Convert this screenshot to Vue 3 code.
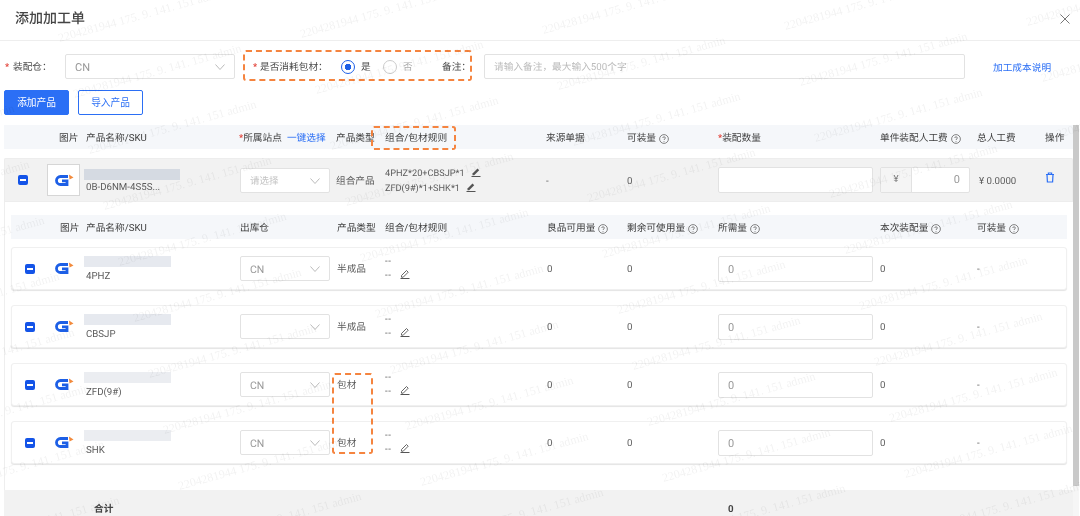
<script setup>
const marks = []
for (let r = -2; r < 10; r++) {
  for (let c = -2; c < 6; c++) {
    const x = 60 + c * 242 + r * 15
    const y = 44 + c * -4 + r * 56
    // only the ones that reach into the page
    if (x > -170 && x < 1060 && y > 4 && y < 560) marks.push({ x, y: y - 12 })
  }
}

const children = [
  { sku: '4PHZ', store: 'CN', type: '半成品', bar: '#e6e9ef' },
  { sku: 'CBSJP', store: '', type: '半成品', bar: '#e6e9ef' },
  { sku: 'ZFD(9#)', store: 'CN', type: '包材', bar: '#ebedf1' },
  { sku: 'SHK', store: 'CN', type: '包材', bar: '#ebedf1' }
]
</script>

<template>
  <div class="page">
    <div class="title-bar">
      <span class="title">添加加工单</span>
      <svg class="close" width="10" height="10" viewBox="0 0 10 10"><path d="M0.5 0.5 9.5 9.5M9.5 0.5 0.5 9.5" stroke="#777" stroke-width="1" fill="none" /></svg>
    </div>

    <div class="form-row">
      <span class="req">*</span>
      <span class="label w-store">装配仓：</span>
      <div class="select w-main">
        <span>CN</span>
        <svg class="chev" width="10" height="6" viewBox="0 0 10 6"><path d="M0.5 0.5 5 5.5 9.5 0.5" stroke="#bbb" fill="none" /></svg>
      </div>
      <span class="req consume">*</span>
      <span class="label w-consume">是否消耗包材：</span>
      <span class="radio on"></span>
      <span class="radio-text">是</span>
      <span class="radio"></span>
      <span class="radio-text off">否</span>
      <span class="label w-note">备注：</span>
      <div class="note-input">请输入备注，最大输入500个字</div>
      <a class="link">加工成本说明</a>
    </div>

    <div class="toolbar">
      <button class="btn primary">添加产品</button>
      <button class="btn ghost">导入产品</button>
    </div>

    <div class="body">
      <div class="tbl">
        <div class="head cols">
          <span></span>
          <span>图片</span>
          <span>产品名称/SKU</span>
          <span class="site"><i>*</i>所属站点<a>一键选择</a></span>
          <span>产品类型</span>
          <span>组合/包材规则</span>
          <span>来源单据</span>
          <span class="tip">可装量
            <svg width="10" height="10" viewBox="0 0 10 10"><circle cx="5" cy="5" r="4.4" fill="none" stroke="#666" stroke-width=".8" /><path d="M3.7 4C3.7 2.4 6.4 2.4 6.4 4 6.4 5 5 4.9 5 6M5 7v.8" fill="none" stroke="#666" stroke-width=".8" /></svg>
          </span>
          <span><i>*</i>装配数量</span>
          <span class="tip">单件装配人工费
            <svg width="10" height="10" viewBox="0 0 10 10"><circle cx="5" cy="5" r="4.4" fill="none" stroke="#666" stroke-width=".8" /><path d="M3.7 4C3.7 2.4 6.4 2.4 6.4 4 6.4 5 5 4.9 5 6M5 7v.8" fill="none" stroke="#666" stroke-width=".8" /></svg>
          </span>
          <span>总人工费</span>
          <span>操作</span>
        </div>

        <div class="parent item-cols">
          <div class="lead">
            <span class="check"></span>
            <div class="thumb">
              <svg width="21" height="13" viewBox="0 0 21 13"><path d="M15 2.5H7.5a4 4 0 0 0 0 8h6.5V6.8H9" fill="none" stroke="#1d5fe6" stroke-width="2.8" /><path d="M16 0.5 20.5 3.5 16.5 5.5Z" fill="#f28a3c" /></svg>
            </div>
          </div>
          <div class="name parent-name">
            <div class="bar"></div>
            <div class="sku">0B-D6NM-4S5S...</div>
          </div>
          <div class="select w-row muted">
            <span>请选择</span>
            <svg class="chev" width="10" height="6" viewBox="0 0 10 6"><path d="M0.5 0.5 5 5.5 9.5 0.5" stroke="#bbb" fill="none" /></svg>
          </div>
          <div class="t">组合产品</div>
          <div class="rules">
            <div>4PHZ*20+CBSJP*1
              <svg class="pen" width="10" height="10" viewBox="0 0 10 10"><path d="M1.5 6.5 6.5 1.5 8.2 3.2 3.2 8.2H1.5Z" fill="#555" /><path d="M0.5 9.5H9.5" stroke="#555" /></svg>
            </div>
            <div>ZFD(9#)*1+SHK*1
              <svg class="pen" width="10" height="10" viewBox="0 0 10 10"><path d="M1.5 6.5 6.5 1.5 8.2 3.2 3.2 8.2H1.5Z" fill="#555" /><path d="M0.5 9.5H9.5" stroke="#555" /></svg>
            </div>
          </div>
          <div class="t">-</div>
          <div class="t">0</div>
          <div class="num-input blank"></div>
          <div class="money">
            <span class="addon">¥</span>
            <span class="money-val">0</span>
          </div>
          <div class="t total">¥ 0.0000</div>
          <div>
            <svg width="10" height="11" viewBox="0 0 10 11"><path d="M1 2.5H9M3.4 2.5V1H6.6V2.5M2 2.5 2.4 10H7.6L8 2.5" fill="none" stroke="#2b6ff5" stroke-width="1.2" /></svg>
          </div>
        </div>

        <div class="kids">
          <div class="kid-head kid-cols">
            <span></span>
            <span>图片</span>
            <span>产品名称/SKU</span>
            <span>出库仓</span>
            <span>产品类型</span>
            <span>组合/包材规则</span>
            <span class="tip">良品可用量
              <svg width="10" height="10" viewBox="0 0 10 10"><circle cx="5" cy="5" r="4.4" fill="none" stroke="#666" stroke-width=".8" /><path d="M3.7 4C3.7 2.4 6.4 2.4 6.4 4 6.4 5 5 4.9 5 6M5 7v.8" fill="none" stroke="#666" stroke-width=".8" /></svg>
            </span>
            <span class="tip">剩余可使用量
              <svg width="10" height="10" viewBox="0 0 10 10"><circle cx="5" cy="5" r="4.4" fill="none" stroke="#666" stroke-width=".8" /><path d="M3.7 4C3.7 2.4 6.4 2.4 6.4 4 6.4 5 5 4.9 5 6M5 7v.8" fill="none" stroke="#666" stroke-width=".8" /></svg>
            </span>
            <span class="tip">所需量
              <svg width="10" height="10" viewBox="0 0 10 10"><circle cx="5" cy="5" r="4.4" fill="none" stroke="#666" stroke-width=".8" /><path d="M3.7 4C3.7 2.4 6.4 2.4 6.4 4 6.4 5 5 4.9 5 6M5 7v.8" fill="none" stroke="#666" stroke-width=".8" /></svg>
            </span>
            <span class="tip">本次装配量
              <svg width="10" height="10" viewBox="0 0 10 10"><circle cx="5" cy="5" r="4.4" fill="none" stroke="#666" stroke-width=".8" /><path d="M3.7 4C3.7 2.4 6.4 2.4 6.4 4 6.4 5 5 4.9 5 6M5 7v.8" fill="none" stroke="#666" stroke-width=".8" /></svg>
            </span>
            <span class="tip">可装量
              <svg width="10" height="10" viewBox="0 0 10 10"><circle cx="5" cy="5" r="4.4" fill="none" stroke="#666" stroke-width=".8" /><path d="M3.7 4C3.7 2.4 6.4 2.4 6.4 4 6.4 5 5 4.9 5 6M5 7v.8" fill="none" stroke="#666" stroke-width=".8" /></svg>
            </span>
          </div>

          <div class="cards">
            <div v-for="kid in children" :key="kid.sku" class="card card-cols">
              <div class="lead kid-lead">
                <span class="check"></span>
                <svg class="kid-logo" width="21" height="13" viewBox="0 0 21 13"><path d="M15 2.5H7.5a4 4 0 0 0 0 8h6.5V6.8H9" fill="none" stroke="#1d5fe6" stroke-width="2.8" /><path d="M16 0.5 20.5 3.5 16.5 5.5Z" fill="#f28a3c" /></svg>
              </div>
              <div class="name kid-name">
                <div class="bar kid-bar" :style="{ background: kid.bar }"></div>
                <div class="sku">{{ kid.sku }}</div>
              </div>
              <div class="select w-row">
                <span>{{ kid.store }}</span>
                <svg class="chev" width="10" height="6" viewBox="0 0 10 6"><path d="M0.5 0.5 5 5.5 9.5 0.5" stroke="#bbb" fill="none" /></svg>
              </div>
              <div class="t">{{ kid.type }}</div>
              <div class="dashes">
                <div>--</div>
                <div>--
                  <svg class="pen" width="10" height="10" viewBox="0 0 10 10"><path d="M1.5 6.5 6.5 1.5 8.2 3.2 3.2 8.2H1.5Z" fill="none" stroke="#555" stroke-width=".9" /><path d="M0.5 9.5H9.5" stroke="#555" /></svg>
                </div>
              </div>
              <div class="t">0</div>
              <div class="t">0</div>
              <div class="num-input">0</div>
              <div class="t">0</div>
              <div class="t">-</div>
            </div>
          </div>
        </div>

        <div class="foot item-cols">
          <span></span>
          <span class="sum-label">合计</span>
          <span></span><span></span><span></span><span></span><span></span>
          <span class="sum-val">0</span>
        </div>
      </div>

      <div class="track"><div class="thumb-bar"></div></div>
    </div>

    <div class="outline o-form"></div>
    <div class="outline o-head"></div>
    <div class="outline o-type"></div>

    <div class="watermarks">
      <span v-for="(m, i) in marks" :key="i" class="mark" :style="{ left: m.x + 'px', top: m.y + 'px' }">2204281944 175. 9. 141. 151 admin</span>
    </div>
  </div>
</template>

<style scoped>
.page {
  position: relative; width: 1080px; height: 516px; overflow: hidden; background: #fff; color: #5c5c5c;
  font-family: Roboto, "Noto Sans CJK SC", sans-serif; font-size: 9.7px; line-height: 14px; filter: blur(0.3px);
  text-rendering: geometricPrecision;
}
.title-bar {
  height: 41px; border-bottom: 1px solid #eee; display: flex; align-items: center; justify-content: space-between;
  padding: 0 10px 2px 15px; box-sizing: border-box;
}
.title { font-size: 14px; color: #444; font-weight: 500; }

.form-row { display: flex; align-items: center; height: 25px; margin-top: 13px; padding-left: 5px; }
.req { color: #e0352b; width: 8px; flex: none; padding-top: 3px; }
.label { flex: none; color: #4a4a4a; padding-top: 3px; }
.w-store { width: 52px; }
.w-main { width: 170px; font-size: 11px; }
.consume { margin-left: 18px; width: 7px; }
.w-consume { width: 81px; }
.radio {
  flex: none; width: 14px; height: 14px; border: 1px solid #ccc; border-radius: 50%; box-sizing: border-box; background: #fff;
}
.radio.on { border-color: #1d5fe6; background: radial-gradient(circle, #1d5fe6 0 3px, #fff 3.5px); }
.radio-text { width: 28px; padding: 3px 0 0 6px; box-sizing: border-box; flex: none; color: #4a4a4a; }
.radio-text.off { color: #aaa; width: 45px; }
.w-note { width: 42px; }
.note-input {
  flex: none; width: 481px; height: 25px; box-sizing: border-box; border: 1px solid #e2e2e2; border-radius: 2px;
  padding: 0 9px; line-height: 25px; color: #bbb; background: #fff;
}
.link { color: #2b6ff5; margin-left: 28px; flex: none; padding-top: 5px; }

.select {
  position: relative; height: 25px; box-sizing: border-box; border: 1px solid #e2e2e2; border-radius: 2px; background: #fff;
  padding: 0 9px; line-height: 25px; color: #999;
}
.select.muted { color: #c4c4c4; }
.w-row { width: 90px; font-size: 10.5px; }
.w-row.muted { font-size: 9.5px; }
.chev { position: absolute; right: 9px; top: 9px; }

.toolbar { display: flex; gap: 9px; margin-top: 11px; padding-left: 4px; }
.btn {
  width: 65px; height: 25px; box-sizing: border-box; border-radius: 2px; font: inherit; padding: 0; border: 1px solid #2b6ff5;
}
.primary { background: #2b6ff5; color: #fff; }
.ghost { background: #fff; color: #2b6ff5; }

.body { display: flex; margin-top: 10px; padding-left: 4px; }
.tbl { width: 1069px; flex: none; }
.track { width: 6px; height: 391px; background: #f6f6f6; }
.thumb-bar { width: 6px; height: 361px; background: #c9c9c9; }

.cols, .item-cols { display: grid; }
.cols { grid-template-columns: 55px 27px 153px 97px 49px 161px 81px 91px 162px 97px 68px 28px; }
.item-cols { grid-template-columns: 80px 156px 96px 49px 161px 81px 91px 162px 97px 68px 28px; }
.kid-cols { display: grid; grid-template-columns: 49px 26px 154px 97px 48px 162px 80px 91px 162px 97px 80px; }
.card-cols { display: grid; grid-template-columns: 72px 156px 97px 48px 162px 80px 91px 162px 97px 80px; }

.head, .kid-head { height: 24px; background: #f5f7fa; align-items: center; color: #3f3f3f; }
.head > span, .kid-head > span { padding-top: 3px; }
.head i, .kid-head i { color: #e0352b; font-style: normal; }
.site a { color: #2b6ff5; margin-left: 5px; }
.tip { display: flex; align-items: center; gap: 3px; }
.t { padding-top: 3px; }

.parent { height: 44px; margin-top: 9px; background: #f2f2f2; align-items: center; border-radius: 2px 2px 0 0; box-shadow: 0 0 0 1px #ededed inset; }
.lead { display: flex; align-items: center; }
.check { flex: none; width: 10px; height: 10px; border-radius: 2px; background: #1454e8; position: relative; margin-left: 14px; }
.check::after { content: ''; position: absolute; left: 2px; right: 2px; top: 4px; height: 2px; background: #fff; }
.thumb {
  flex: none; width: 33px; height: 32px; margin-left: 19px; box-sizing: border-box; border: 1px solid #d6d6d6; background: #fff;
  display: flex; align-items: center; justify-content: center;
}
.name { display: flex; flex-direction: column; }
.parent-name { padding-top: 4px; }
.parent-name .sku { margin-top: 1px; }
.kid-name { padding-top: 3px; }
.bar { width: 96px; height: 11px; background: #d5dae2; }
.sku { margin: 3px 0 0 2px; }
.rules { padding-top: 3px; font-size: 9.2px; }
.rules div { height: 15px; white-space: nowrap; }
.pen { margin-left: 4px; vertical-align: -1px; }
.num-input {
  width: 155px; height: 26px; box-sizing: border-box; border: 1px solid #e2e2e2; border-radius: 2px; background: #fff;
  padding: 0 9px; line-height: 26px; color: #999; font-size: 11px;
}
.money { display: flex; width: 90px; height: 26px; box-sizing: border-box; border: 1px solid #e2e2e2; border-radius: 2px; background: #fff; }
.addon { width: 30px; background: #f5f5f5; border-right: 1px solid #e2e2e2; text-align: center; line-height: 24px; color: #777; }
.money-val { flex: 1; text-align: right; padding-right: 9px; line-height: 24px; color: #999; font-size: 11px; }
.total { padding-left: 2px; }

.kids { border-left: 1px solid #eee; padding: 13px 6px 0 6px; height: 288px; box-sizing: border-box; }
.cards { display: flex; flex-direction: column; gap: 15px; margin-top: 8px; }
.card {
  height: 43px; align-items: center; border: 1px solid #f0f0f0; border-radius: 3px; box-sizing: border-box; background: #fff;
  box-shadow: 0 1px 1px #e4e4e4;
}
.kid-lead .check { margin-left: 13px; }
.kid-logo { margin-left: 18px; }
.kid-bar { width: 87px; }
.dashes div { height: 14px; letter-spacing: 0.6px; }
.dashes .pen { margin-left: 5px; }

.foot { height: 26px; background: #f2f2f2; align-items: start; padding-top: 13px; box-sizing: border-box; color: #444; }
.sum-label { padding-left: 10px; font-weight: 700; }
.sum-val { padding-left: 10px; font-weight: 700; }

.outline { position: absolute; border: 2px dashed #f5843f; border-radius: 3px; box-sizing: border-box; }
.o-form { left: 243px; top: 50px; width: 229px; height: 31px; }
.o-head { left: 371px; top: 126px; width: 85px; height: 24px; }
.o-type { left: 332px; top: 373px; width: 41px; height: 81px; }

.watermarks { position: absolute; inset: 0; pointer-events: none; overflow: hidden; }
.mark {
  position: absolute; white-space: nowrap; font-family: "Liberation Serif", serif; font-size: 12px; line-height: 12px;
  color: rgba(0, 0, 0, 0.055); transform: rotate(-15.5deg); transform-origin: 0 100%;
}
</style>

<style>
html, body { margin: 0; overflow: hidden; background: #fff; }
</style>
